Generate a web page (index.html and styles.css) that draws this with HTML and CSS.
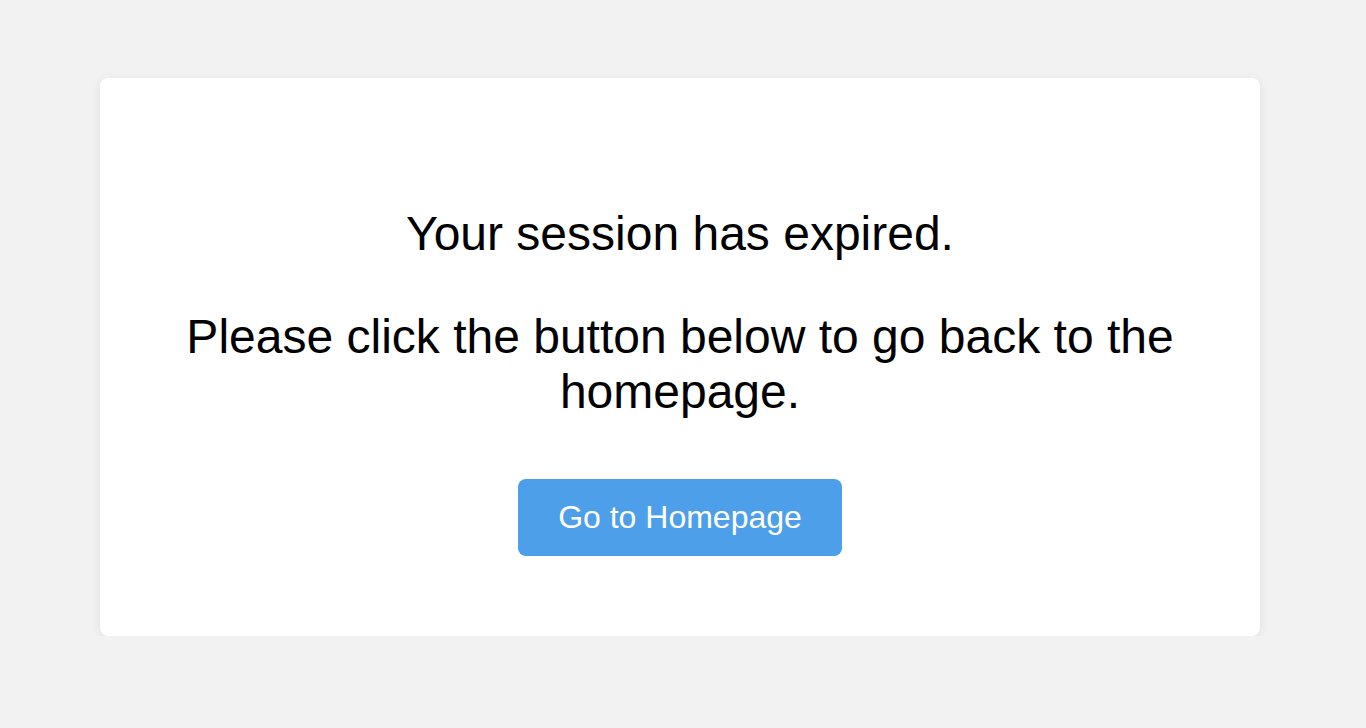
FILE: index.html
```html
<!DOCTYPE html>
<html lang="en">
<head>
    <meta charset="UTF-8">
    <meta name="viewport" content="width=device-width, initial-scale=1.0">
    <title>Session Expired</title>
    <link rel="stylesheet" href="styles.css">
</head>
<body>

<div class="card">
    <p class="message">Your session has expired.</p>
    <p class="message">Please click the button below to go back to the homepage.</p>
    <div class="actions">
        <a href="#" class="button">Go to Homepage</a>
    </div>
</div>

</body>
</html>
```

FILE: styles.css
```css
body {
    font-family: "Liberation Sans", Arial, sans-serif;
    background-color: #f2f2f2;
    margin: 0;
    padding: 78px 106px 0 100px;
}
.card {
    background-color: #fff;
    border-radius: 8px;
    box-shadow: 0 2px 10px rgba(0, 0, 0, 0.08);
    padding: 128px 40px 80px;
    text-align: center;
}
.message {
    font-size: 48px;
    color: #000;
    margin: 0 0 48px;
}
.actions {
    padding-top: 12px;
}
.button {
    display: inline-block;
    padding: 20px 40px;
    font-size: 32px;
    color: #fff;
    background-color: #4e9fe9;
    border-radius: 8px;
    text-decoration: none;
}
```
